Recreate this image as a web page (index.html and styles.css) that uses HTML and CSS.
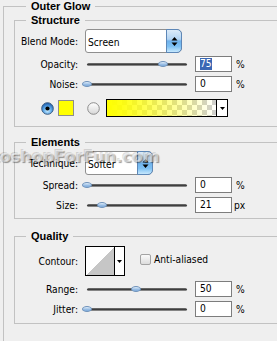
FILE: index.html
```html
<!DOCTYPE html>
<html>
<head>
<meta charset="utf-8">
<title>Outer Glow</title>
<link rel="stylesheet" href="styles.css">
</head>
<body>
<div class="panel">
  <fieldset class="group outer">
    <legend>Outer Glow</legend>

    <fieldset class="group sub structure">
      <legend>Structure</legend>
      <div class="row row-select">
        <span class="lbl">Blend Mode:</span>
        <div class="select select-blend">
          <span class="val">Screen</span>
          <span class="sbtn"><svg width="7" height="11" viewBox="0 0 7 11"><path d="M0.5 4.5 L3.5 1 L6.5 4.5 Z M0.5 6.5 L3.5 10 L6.5 6.5 Z" fill="#000"/></svg></span>
        </div>
      </div>
      <div class="row row-slider row-first">
        <span class="lbl">Opacity:</span>
        <div class="slider"><span class="track"></span><span class="thumb" style="left:73px"></span></div>
        <span class="num"><span class="hl">75</span></span>
        <span class="unit">%</span>
      </div>
      <div class="row row-slider">
        <span class="lbl">Noise:</span>
        <div class="slider"><span class="track"></span><span class="thumb" style="left:-3px"></span></div>
        <span class="num">0</span>
        <span class="unit">%</span>
      </div>
      <div class="row row-color">
        <span class="radio">
          <svg width="13" height="13" viewBox="0 0 13 13">
            <defs>
              <radialGradient id="rbOn" cx="50%" cy="70%" r="65%">
                <stop offset="0" stop-color="#c9ecff"/>
                <stop offset="0.55" stop-color="#5aa5e6"/>
                <stop offset="1" stop-color="#1f5fae"/>
              </radialGradient>
            </defs>
            <circle cx="6.5" cy="6.5" r="5.8" fill="url(#rbOn)" stroke="#3b5c82" stroke-width="1"/>
            <circle cx="6.5" cy="6.5" r="2.1" fill="#000"/>
          </svg>
        </span>
        <span class="swatch"></span>
        <span class="radio radio-off">
          <svg width="13" height="13" viewBox="0 0 13 13">
            <defs>
              <linearGradient id="rbOff" x1="0" y1="0" x2="0" y2="1">
                <stop offset="0" stop-color="#ffffff"/>
                <stop offset="1" stop-color="#d6d6d6"/>
              </linearGradient>
            </defs>
            <circle cx="6.5" cy="6.5" r="5.8" fill="url(#rbOff)" stroke="#8c8c8c" stroke-width="1"/>
          </svg>
        </span>
        <span class="gradient">
          <span class="gfill"></span>
          <span class="garrow"><svg width="5" height="3" viewBox="0 0 5 3"><path d="M0 0 H5 L2.5 3 Z" fill="#000"/></svg></span>
        </span>
      </div>
    </fieldset>

    <fieldset class="group sub elements">
      <legend>Elements</legend>
      <div class="row row-select">
        <span class="lbl">Technique:</span>
        <div class="select select-tech">
          <span class="val">Softer</span>
          <span class="sbtn"><svg width="7" height="11" viewBox="0 0 7 11"><path d="M0.5 4.5 L3.5 1 L6.5 4.5 Z M0.5 6.5 L3.5 10 L6.5 6.5 Z" fill="#000"/></svg></span>
        </div>
      </div>
      <div class="row row-slider">
        <span class="lbl">Spread:</span>
        <div class="slider"><span class="track"></span><span class="thumb" style="left:-3px"></span></div>
        <span class="num">0</span>
        <span class="unit">%</span>
      </div>
      <div class="row row-slider">
        <span class="lbl">Size:</span>
        <div class="slider"><span class="track"></span><span class="thumb" style="left:12px"></span></div>
        <span class="num">21</span>
        <span class="unit unit-px">px</span>
      </div>
    </fieldset>

    <fieldset class="group sub quality">
      <legend>Quality</legend>
      <div class="row row-contour">
        <span class="lbl">Contour:</span>
        <span class="contour">
          <span class="cprev"></span>
          <span class="carrow"><svg width="5" height="3" viewBox="0 0 5 3"><path d="M0 0 H5 L2.5 3 Z" fill="#000"/></svg></span>
        </span>
        <span class="check"></span>
        <span class="check-lbl">Anti-aliased</span>
      </div>
      <div class="row row-slider row-range">
        <span class="lbl">Range:</span>
        <div class="slider"><span class="track"></span><span class="thumb" style="left:46px"></span></div>
        <span class="num">50</span>
        <span class="unit">%</span>
      </div>
      <div class="row row-slider">
        <span class="lbl">Jitter:</span>
        <div class="slider"><span class="track"></span><span class="thumb" style="left:-3px"></span></div>
        <span class="num">0</span>
        <span class="unit">%</span>
      </div>
    </fieldset>
  </fieldset>

  <div class="watermark">PhotoshopForFun.com</div>
</div>
</body>
</html>
```

FILE: styles.css
```css
html, body {
  margin: 0;
  padding: 0;
  overflow: hidden;
}

body {
  background: #efefef;
  font-family: "DejaVu Sans Condensed", "DejaVu Sans", sans-serif;
  font-stretch: condensed;
  font-size: 10.2px;
  color: #000;
}

.panel {
  position: relative;
  width: 330px;
  height: 341px;
}

.group {
  margin: 0;
  border: 1px solid #c2c2c2;
  min-width: 0;
}

.group > legend {
  font-family: "Liberation Sans", Arial, sans-serif;
  font-stretch: normal;
  font-weight: bold;
  font-size: 11px;
  line-height: 13px;
  padding: 0 5px;
}

.outer {
  margin-left: 3px;
  padding: 1px 0 0 10px;
  height: 400px;
  border-right: none;
  border-bottom: none;
}

.outer > legend {
  margin-left: 12px;
}

.sub > legend {
  margin-left: 11px;
}

.structure {
  padding: 2px 0 8px 0;
}

.elements {
  margin-top: 9px;
  padding: 2px 0 3px 0;
}

.quality {
  margin-top: 11px;
  padding: 3px 0 4px 0;
}

.row {
  display: flex;
  align-items: center;
}

.lbl {
  width: 63px;
  text-align: right;
  line-height: 13px;
  white-space: nowrap;
}

/* select */
.row-select {
  height: 24px;
}

.select {
  margin-left: 7px;
  height: 24px;
  box-sizing: border-box;
  display: flex;
  background: #fff;
  border: 1px solid #8f8f8f;
  border-radius: 3px 5px 5px 3px;
}

.select-blend { width: 97px; }
.select-tech { width: 68px; }

.select .val {
  flex: 1;
  display: flex;
  align-items: center;
  padding-left: 2px;
  padding-top: 2px;
}

.sbtn {
  width: 16px;
  margin: -1px -1px -1px 0;
  box-sizing: border-box;
  border: 1px solid #5d87b7;
  border-radius: 0 5px 5px 0;
  background: linear-gradient(#dcebf9 0%, #b2d3f2 42%, #6fb2ec 50%, #7fc1f3 75%, #c6e8fd 100%);
  display: flex;
  align-items: center;
  justify-content: center;
}

.sbtn svg { display: block; }

/* slider rows */
.row-slider {
  height: 20px;
}

.row-first { margin-top: 1px; }
.row-range { margin-top: 3px; }

.slider {
  position: relative;
  margin-left: 7px;
  width: 104px;
  height: 20px;
  padding: 0 2px;
  box-sizing: border-box;
  display: flex;
  align-items: center;
}

.track {
  flex: 1;
  height: 3px;
  border-radius: 2px;
  background: linear-gradient(#7a7a7a, #3f3f3f 50%, #a8a8a8);
}

.thumb {
  position: absolute;
  top: 7px;
  width: 10px;
  height: 6px;
  box-sizing: border-box;
  border-radius: 50%;
  border: 1px solid #6f92ba;
  background: linear-gradient(#e3f0fb, #9cc0e6 55%, #7ea9d8);
}

.num {
  margin-left: 6px;
  width: 37px;
  height: 16px;
  box-sizing: border-box;
  background: #fff;
  border: 1px solid #7d7d7d;
  padding-left: 4px;
  display: flex;
  align-items: center;
  line-height: 12px;
}

.hl {
  background: #3a67b4;
  color: #fff;
}

.unit {
  margin-left: 4px;
  line-height: 13px;
}

.unit-px { margin-left: 2px; }

/* color row */
.row-color {
  margin-top: 4px;
  height: 20px;
}

.radio {
  display: flex;
  width: 13px;
  height: 13px;
  margin-left: 26px;
}

.radio svg { display: block; }

.radio-off { margin-left: 13px; }

.swatch {
  margin-left: 4px;
  width: 16px;
  height: 16px;
  box-sizing: border-box;
  border: 1px solid #8d8d8d;
  background: #ffff00;
}

.gradient {
  margin-left: 6px;
  width: 122px;
  height: 18px;
  box-sizing: border-box;
  border: 1px solid #000;
  display: flex;
}

.gfill {
  flex: 1;
  background:
    linear-gradient(to right, #ffff00 0%, rgba(255, 255, 0, 0.9) 15%, rgba(255, 255, 0, 0) 100%),
    conic-gradient(#cfcfcf 0 25%, #ffffff 0 50%, #cfcfcf 0 75%, #ffffff 0) 0 0 / 10px 10px;
}

.garrow {
  width: 11px;
  box-sizing: border-box;
  border-left: 1px solid #000;
  background: #fff;
  display: flex;
  align-items: center;
  justify-content: center;
}

.garrow svg, .carrow svg { display: block; }

/* contour row */
.row-contour {
  height: 30px;
}

.contour {
  margin-left: 7px;
  width: 40px;
  height: 30px;
  box-sizing: border-box;
  border: 1px solid #000;
  display: flex;
}

.cprev {
  flex: 1;
  background: linear-gradient(to bottom right, #ffffff 50%, #c6c6c6 50%);
}

.carrow {
  width: 10px;
  box-sizing: border-box;
  border-left: 1px solid #000;
  background: #fff;
  display: flex;
  align-items: center;
  justify-content: center;
}

.check {
  margin-left: 15px;
  width: 11px;
  height: 11px;
  box-sizing: border-box;
  border: 1px solid #a3a3a3;
  border-radius: 2px;
  background: linear-gradient(#fafafa, #dcdcdc);
  margin-top: -4px;
}

.check-lbl {
  margin-left: 3px;
  margin-top: -4px;
  line-height: 13px;
}

/* watermark overlay */
.watermark {
  position: absolute;
  left: -42px;
  top: 149px;
  font-family: "DejaVu Sans", sans-serif;
  font-stretch: normal;
  font-weight: bold;
  font-size: 16px;
  line-height: 16px;
  white-space: nowrap;
  color: rgba(255, 255, 255, 0.55);
  text-shadow: 1px 1px 1px rgba(0, 0, 0, 0.4), -1px -1px 0 rgba(0, 0, 0, 0.12);
  pointer-events: none;
}
```
